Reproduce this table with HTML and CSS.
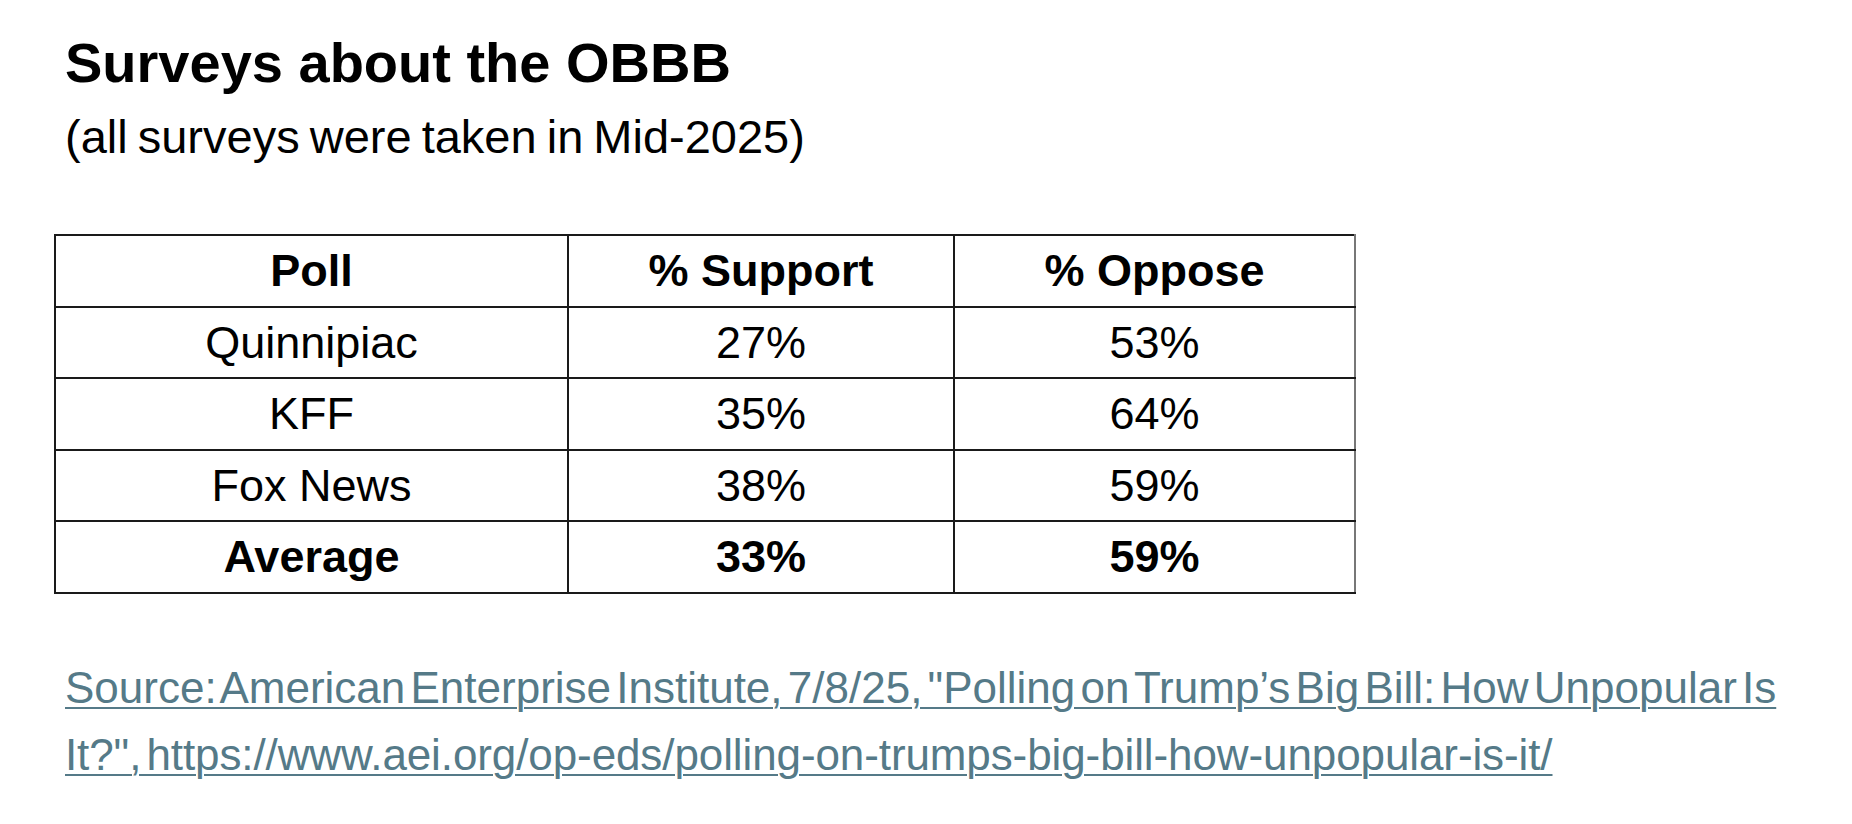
FILE: index.html
```html
<!DOCTYPE html>
<html lang="en">
<head>
<meta charset="utf-8">
<title>Surveys about the OBBB</title>
<link rel="stylesheet" href="styles.css">
</head>
<body>
<main class="slide">
  <h1 class="title">Surveys about the OBBB</h1>
  <p class="subtitle">(all surveys were taken in Mid-2025)</p>
  <table class="polls">
    <colgroup>
      <col class="c1"><col class="c2"><col class="c3">
    </colgroup>
    <thead>
      <tr><th>Poll</th><th>% Support</th><th>% Oppose</th></tr>
    </thead>
    <tbody>
      <tr><td>Quinnipiac</td><td>27%</td><td>53%</td></tr>
      <tr><td>KFF</td><td>35%</td><td>64%</td></tr>
      <tr><td>Fox News</td><td>38%</td><td>59%</td></tr>
      <tr class="avg"><td>Average</td><td>33%</td><td>59%</td></tr>
    </tbody>
  </table>
  <p class="source"><a href="#">Source: American Enterprise Institute, 7/8/25, "Polling on Trump’s Big Bill: How Unpopular Is<br><span class="second">It?", https://www.aei.org/op-eds/polling-on-trumps-big-bill-how-unpopular-is-it/</span></a></p>
</main>
</body>
</html>
```

FILE: styles.css
```css
html, body {
  margin: 0;
  padding: 0;
  background: #ffffff;
}

body {
  font-family: "Liberation Sans", Arial, sans-serif;
  color: #000000;
}

.slide {
  display: flex;
  flex-direction: column;
  align-items: flex-start;
  padding: 35px 0 0 0;
}

.title {
  margin: 0 0 0 65px;
  font-size: 56px;
  line-height: 56px;
  font-weight: 700;
}

.subtitle {
  margin: 23px 0 0 65px;
  font-size: 47px;
  line-height: 46px;
  font-weight: 400;
  word-spacing: -3px;
}

.polls {
  margin: 74px 0 0 54px;
  border-collapse: collapse;
  table-layout: fixed;
  width: 1300px;
  font-size: 45px;
}

.c1 { width: 513px; }
.c2 { width: 386px; }
.c3 { width: 401px; }

.polls th,
.polls td {
  border: 2px solid #1a1a1a;
  height: 69.5px;
  padding: 0;
  text-align: center;
  vertical-align: middle;
  line-height: 1;
}

.polls th { font-weight: 700; }

.polls .avg td { font-weight: 700; }

.polls th:last-child,
.polls td:last-child {
  border-right-color: #777777;
}

.source {
  margin: 60px 0 0 65px;
  font-size: 44px;
  line-height: 67px;
  word-spacing: -7px;
}

.source a {
  color: #557a88;
  text-decoration: underline;
  text-underline-offset: 4px;
  text-decoration-thickness: 2px;
}

.source .second {
  letter-spacing: -0.1px;
}
```
